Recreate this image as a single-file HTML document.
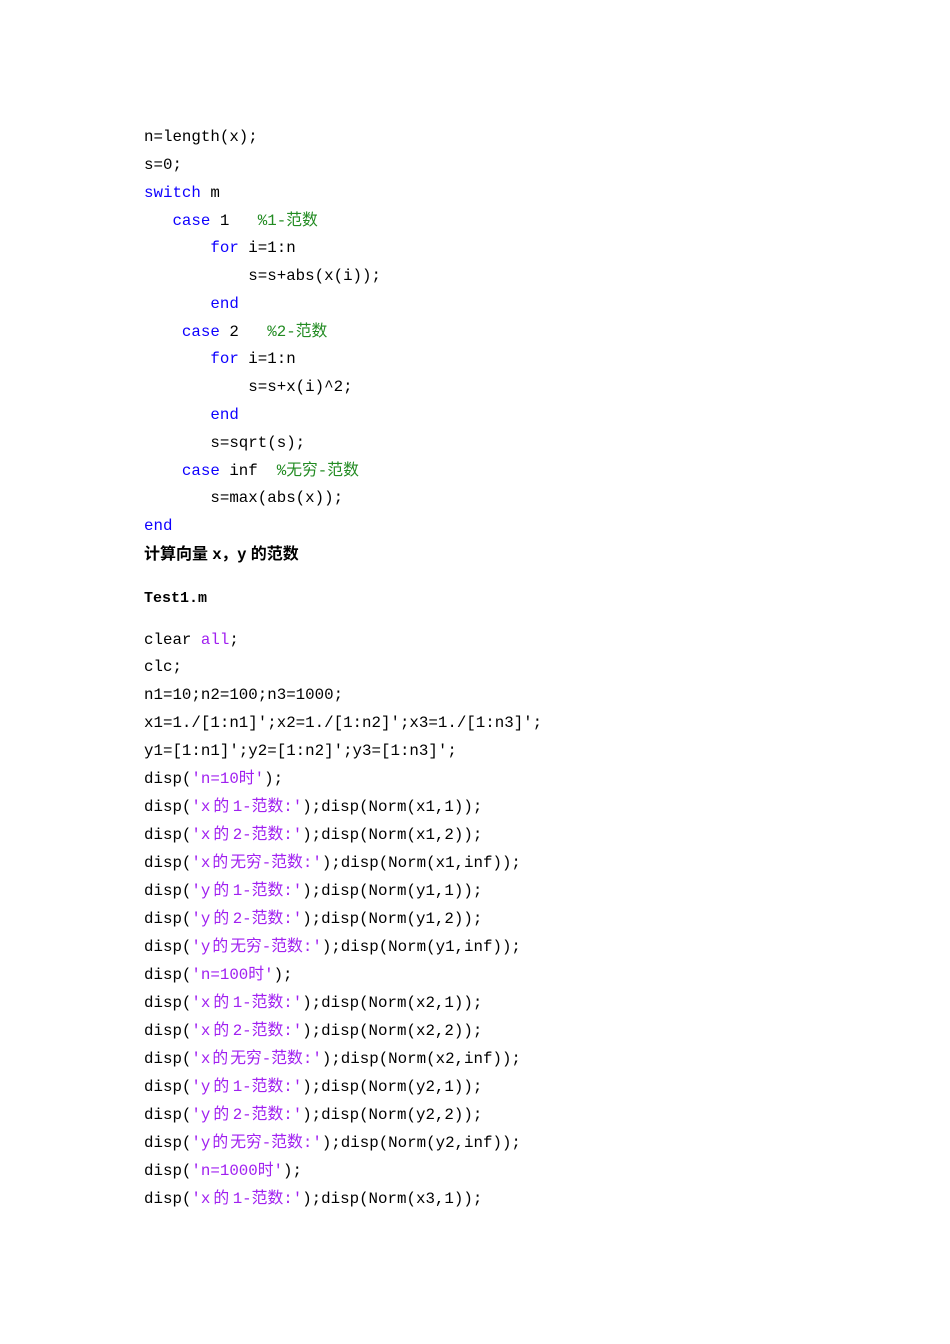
<!DOCTYPE html>
<html><head><meta charset="utf-8"><style>
body{margin:0;background:#fff;width:950px;height:1344px;position:relative;overflow:hidden}
.l{position:absolute;left:144px;height:20px;line-height:20px;white-space:pre;font-family:"Liberation Mono","Noto Sans CJK SC",monospace;font-size:15.8px;color:#000;margin-top:2px}
.k{color:#0e00ff}.c{color:#228b22}.s{color:#a020f0}
.d{margin:0 3.5px 0 3px}.e{margin:0 2px}
.h{font-family:"Liberation Sans","Noto Sans CJK SC",sans-serif;font-weight:bold;font-size:16px}
.hm{font-family:"Liberation Mono","Noto Sans CJK SC",monospace;font-weight:bold;font-size:15px}
</style></head><body>
<div class="l" style="top:125px">n=length(x);</div>
<div class="l" style="top:153px">s=0;</div>
<div class="l" style="top:181px"><span class="k">switch</span> m</div>
<div class="l" style="top:209px">   <span class="k">case</span> 1   <span class="c">%1-范数</span></div>
<div class="l" style="top:236px">       <span class="k">for</span> i=1:n</div>
<div class="l" style="top:264px">           s=s+abs(x(i));</div>
<div class="l" style="top:292px">       <span class="k">end</span></div>
<div class="l" style="top:320px">    <span class="k">case</span> 2   <span class="c">%2-范数</span></div>
<div class="l" style="top:347px">       <span class="k">for</span> i=1:n</div>
<div class="l" style="top:375px">           s=s+x(i)^2;</div>
<div class="l" style="top:403px">       <span class="k">end</span></div>
<div class="l" style="top:431px">       s=sqrt(s);</div>
<div class="l" style="top:459px">    <span class="k">case</span> inf  <span class="c">%无穷-范数</span></div>
<div class="l" style="top:486px">       s=max(abs(x));</div>
<div class="l" style="top:514px"><span class="k">end</span></div>
<div class="l h" style="top:543px">计算向量 x，y 的范数</div>
<div class="l hm" style="top:587px">Test1.m</div>
<div class="l" style="top:628px">clear <span class="s">all</span>;</div>
<div class="l" style="top:655px">clc;</div>
<div class="l" style="top:683px">n1=10;n2=100;n3=1000;</div>
<div class="l" style="top:711px">x1=1./[1:n1]';x2=1./[1:n2]';x3=1./[1:n3]';</div>
<div class="l" style="top:739px">y1=[1:n1]';y2=[1:n2]';y3=[1:n3]';</div>
<div class="l" style="top:767px">disp(<span class="s">'n=10时'</span>);</div>
<div class="l" style="top:795px">disp(<span class="s">'x<span class="d">的</span>1-范数:'</span>);disp(Norm(x1,1));</div>
<div class="l" style="top:823px">disp(<span class="s">'x<span class="d">的</span>2-范数:'</span>);disp(Norm(x1,2));</div>
<div class="l" style="top:851px">disp(<span class="s">'x<span class="e">的</span>无穷-范数:'</span>);disp(Norm(x1,inf));</div>
<div class="l" style="top:879px">disp(<span class="s">'y<span class="d">的</span>1-范数:'</span>);disp(Norm(y1,1));</div>
<div class="l" style="top:907px">disp(<span class="s">'y<span class="d">的</span>2-范数:'</span>);disp(Norm(y1,2));</div>
<div class="l" style="top:935px">disp(<span class="s">'y<span class="e">的</span>无穷-范数:'</span>);disp(Norm(y1,inf));</div>
<div class="l" style="top:963px">disp(<span class="s">'n=100时'</span>);</div>
<div class="l" style="top:991px">disp(<span class="s">'x<span class="d">的</span>1-范数:'</span>);disp(Norm(x2,1));</div>
<div class="l" style="top:1019px">disp(<span class="s">'x<span class="d">的</span>2-范数:'</span>);disp(Norm(x2,2));</div>
<div class="l" style="top:1047px">disp(<span class="s">'x<span class="e">的</span>无穷-范数:'</span>);disp(Norm(x2,inf));</div>
<div class="l" style="top:1075px">disp(<span class="s">'y<span class="d">的</span>1-范数:'</span>);disp(Norm(y2,1));</div>
<div class="l" style="top:1103px">disp(<span class="s">'y<span class="d">的</span>2-范数:'</span>);disp(Norm(y2,2));</div>
<div class="l" style="top:1131px">disp(<span class="s">'y<span class="e">的</span>无穷-范数:'</span>);disp(Norm(y2,inf));</div>
<div class="l" style="top:1159px">disp(<span class="s">'n=1000时'</span>);</div>
<div class="l" style="top:1187px">disp(<span class="s">'x<span class="d">的</span>1-范数:'</span>);disp(Norm(x3,1));</div>
</body></html>
